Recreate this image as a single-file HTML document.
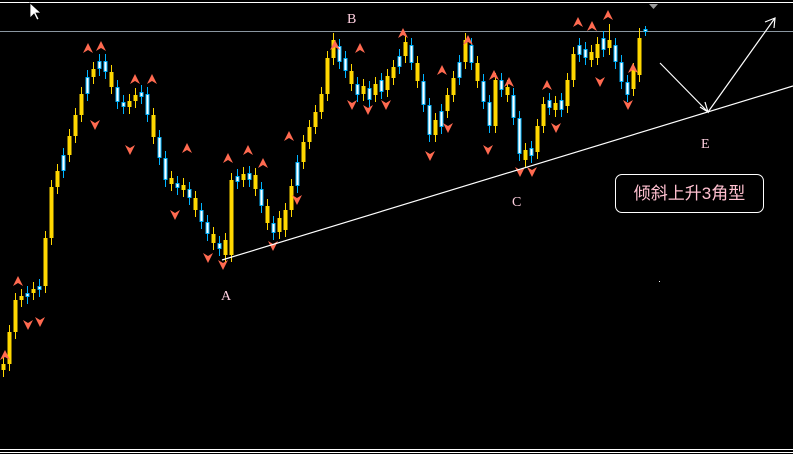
<!DOCTYPE html>
<html><head><meta charset="utf-8"><style>
html,body{margin:0;padding:0;background:#000;width:793px;height:454px;overflow:hidden}
svg{position:absolute;left:0;top:0}
.lbl{font-family:"Liberation Serif","Noto Serif CJK SC",serif;font-size:14px;fill:#ffd0e0}
.box{position:absolute;left:615px;top:174px;width:149px;height:39px;border:1px solid #fff;border-radius:7px;box-sizing:border-box;color:#ffc0d0;font-family:"Liberation Sans","Noto Sans CJK SC",sans-serif;font-size:17px;line-height:37px;text-align:center}
</style></head><body>
<svg width="793" height="454" xmlns="http://www.w3.org/2000/svg">
<line x1="0" y1="2.5" x2="793" y2="2.5" stroke="#fff"/>
<line x1="0" y1="31.5" x2="793" y2="31.5" stroke="#8a96a0"/>
<line x1="0" y1="449.5" x2="793" y2="449.5" stroke="#fff"/>
<line x1="0" y1="452.5" x2="793" y2="452.5" stroke="#fff"/>
<polygon points="649,4 658,4 653.5,9" fill="#999"/>
<!-- yellow -->
<path fill="none" stroke="#ffd700" stroke-width="1" d="M3.5 357V377M9.5 325V371M15.5 293V339M21.5 289V307M33.5 282V300M45.5 231V293M51.5 180V245M57.5 164V194M69.5 129V162M75.5 108V143M81.5 87V122M93.5 62V84M111.5 65V94M129.5 94V114M135.5 88V108M153.5 108V144M171.5 171V191M183.5 178V197M195.5 191V217M213.5 227V250M225.5 233V262M231.5 173V262M243.5 167V187M255.5 168V196M267.5 199V230M279.5 211V239M285.5 203V237M291.5 179V217M303.5 135V169M309.5 120V149M315.5 105V134M321.5 87V119M327.5 51V101M333.5 33V65M351.5 64V91M363.5 79V101M375.5 77V102M387.5 69V97M393.5 60V85M405.5 35V63M417.5 56V88M435.5 113V142M447.5 88V118M453.5 71V102M465.5 33V69M477.5 56V88M495.5 73V133M507.5 80V102M525.5 143V167M537.5 119V159M543.5 97V133M555.5 96V117M567.5 73V113M573.5 47V87M591.5 45V67M597.5 37V65M609.5 24V55M633.5 63V96M639.5 28V82"/>
<path fill="none" stroke="#ffd700" stroke-width="4" d="M3.5 364V370M9.5 332V364M15.5 300V332M21.5 296V300M33.5 289V293M45.5 238V286M51.5 187V238M57.5 171V187M69.5 136V155M75.5 115V136M81.5 94V115M93.5 69V77M111.5 72V87M129.5 101V107M135.5 95V101M153.5 115V137M171.5 178V184M183.5 185V190M195.5 198V210M213.5 234V243M225.5 240V255M231.5 180V255M243.5 174V180M255.5 175V189M267.5 206V223M279.5 218V232M285.5 210V230M291.5 186V210M303.5 142V162M309.5 127V142M315.5 112V127M321.5 94V112M327.5 58V94M333.5 40V58M351.5 71V84M363.5 86V94M375.5 84V95M387.5 76V90M393.5 67V78M405.5 42V56M417.5 63V81M435.5 120V135M447.5 95V111M453.5 78V95M465.5 40V62M477.5 63V81M495.5 80V126M507.5 87V95M525.5 150V160M537.5 126V152M543.5 104V126M555.5 103V110M567.5 80V106M573.5 54V80M591.5 52V60M597.5 44V58M609.5 40V48M633.5 70V89M639.5 38V75"/>
<!-- blue -->
<path fill="none" stroke="#00b4ff" stroke-width="1" d="M27.5 286V304M39.5 279V297M63.5 148V178M87.5 70V101M99.5 54V76M105.5 54V79M117.5 80V109M123.5 95V114M141.5 85V104M147.5 87V122M159.5 130V165M165.5 151V187M177.5 176V195M189.5 182V205M201.5 203V229M207.5 215V241M219.5 236V256M237.5 169V189M249.5 166V187M261.5 182V213M273.5 216V240M297.5 155V193M339.5 39V69M345.5 51V78M357.5 77V102M369.5 81V107M381.5 73V99M399.5 49V74M411.5 38V70M423.5 74V112M429.5 98V142M441.5 104V134M459.5 55V85M471.5 38V70M483.5 74V109M489.5 95V133M501.5 73V97M513.5 88V125M519.5 111V161M531.5 141V163M549.5 93V115M561.5 93V117M579.5 38V62M585.5 42V65M603.5 31V57M615.5 38V69M621.5 55V89M627.5 75V102M645.5 26V36"/>
<path fill="none" stroke="#00b4ff" stroke-width="4" d="M27.5 293V297M39.5 286V290M63.5 155V171M87.5 77V94M99.5 61V69M105.5 61V72M117.5 87V102M123.5 102V107M141.5 92V97M147.5 94V115M159.5 137V158M165.5 158V180M177.5 183V188M189.5 189V198M201.5 210V222M207.5 222V234M219.5 243V249M237.5 176V182M249.5 173V180M261.5 189V206M273.5 223V233M297.5 162V186M339.5 46V62M345.5 58V71M357.5 84V95M369.5 88V100M381.5 80V92M399.5 56V67M411.5 45V63M423.5 81V105M429.5 105V135M441.5 111V127M459.5 62V78M471.5 45V63M483.5 81V102M489.5 102V126M501.5 80V90M513.5 95V118M519.5 118V154M531.5 148V156M549.5 100V108M561.5 100V110M579.5 45V55M585.5 49V58M603.5 38V50M615.5 45V62M621.5 62V82M627.5 82V95M645.5 29V32"/>
<path fill="none" stroke="#fff" stroke-width="2" d="M27.5 294V296M39.5 287V289M63.5 156V170M87.5 78V93M99.5 62V68M105.5 62V71M117.5 88V101M123.5 103V106M141.5 93V96M147.5 95V114M159.5 138V157M165.5 159V179M177.5 184V187M189.5 190V197M201.5 211V221M207.5 223V233M219.5 244V248M237.5 177V181M249.5 174V179M261.5 190V205M273.5 224V232M297.5 163V185M339.5 47V61M345.5 59V70M357.5 85V94M369.5 89V99M381.5 81V91M399.5 57V66M411.5 46V62M423.5 82V104M429.5 106V134M441.5 112V126M459.5 63V77M471.5 46V62M483.5 82V101M489.5 103V125M501.5 81V89M513.5 96V117M519.5 119V153M531.5 149V155M549.5 101V107M561.5 101V109M579.5 46V54M585.5 50V57M603.5 39V49M615.5 46V61M621.5 63V81M627.5 83V94M645.5 30V31"/>
<!-- arrows -->
<g fill="#ff6a50">
<path d="M0,360 L5,350 L10,360 L5,357Z M13,286 L18,276 L23,286 L18,283Z M83,53 L88,43 L93,53 L88,50Z M96,51 L101,41 L106,51 L101,48Z M130,84 L135,74 L140,84 L135,81Z M147,84 L152,74 L157,84 L152,81Z M182,153 L187,143 L192,153 L187,150Z M223,163 L228,153 L233,163 L228,160Z M243,155 L248,145 L253,155 L248,152Z M258,168 L263,158 L268,168 L263,165Z M284,141 L289,131 L294,141 L289,138Z M330,50 L335,40 L340,50 L335,47Z M355,53 L360,43 L365,53 L360,50Z M398,38 L403,28 L408,38 L403,35Z M437,75 L442,65 L447,75 L442,72Z M463,45 L468,35 L473,45 L468,42Z M489,80 L494,70 L499,80 L494,77Z M504,87 L509,77 L514,87 L509,84Z M542,90 L547,80 L552,90 L547,87Z M573,27 L578,17 L583,27 L578,24Z M587,31 L592,21 L597,31 L592,28Z M603,20 L608,10 L613,20 L608,17Z M628,73 L633,63 L638,73 L633,70Z"/>
<path d="M23,320 L28,330 L33,320 L28,323Z M35,317 L40,327 L45,317 L40,320Z M90,120 L95,130 L100,120 L95,123Z M125,145 L130,155 L135,145 L130,148Z M170,210 L175,220 L180,210 L175,213Z M203,253 L208,263 L213,253 L208,256Z M218,260 L223,270 L228,260 L223,263Z M268,241 L273,251 L278,241 L273,244Z M292,195 L297,205 L302,195 L297,198Z M347,100 L352,110 L357,100 L352,103Z M363,105 L368,115 L373,105 L368,108Z M381,100 L386,110 L391,100 L386,103Z M425,151 L430,161 L435,151 L430,154Z M443,123 L448,133 L453,123 L448,126Z M483,145 L488,155 L493,145 L488,148Z M515,167 L520,177 L525,167 L520,170Z M527,167 L532,177 L537,167 L532,170Z M551,123 L556,133 L561,123 L556,126Z M595,77 L600,87 L605,77 L600,80Z M623,100 L628,110 L633,100 L628,103Z"/>
</g>
<g stroke="#fff" stroke-width="1.2" fill="none">
<line x1="222" y1="260" x2="793" y2="86"/>
<line x1="660" y1="63" x2="708" y2="112"/>
<line x1="708" y1="112" x2="775" y2="18"/>
<polyline points="700,107 708,112 705,102"/>
<polyline points="765,22 775,18 774,28"/>
</g>
<text class="lbl" x="347" y="23">B</text>
<text class="lbl" x="221" y="300">A</text>
<text class="lbl" x="512" y="206">C</text>
<text class="lbl" x="701" y="148">E</text>
<rect x="659" y="281" width="1" height="1" fill="#fff"/>
<path d="M30,3 L30,18 L34,14 L37,20 L39,19 L36,13 L41,13 Z" fill="#fff" stroke="#000" stroke-width="0.8"/>
</svg>
<div class="box">倾斜上升3角型</div>
</body></html>
